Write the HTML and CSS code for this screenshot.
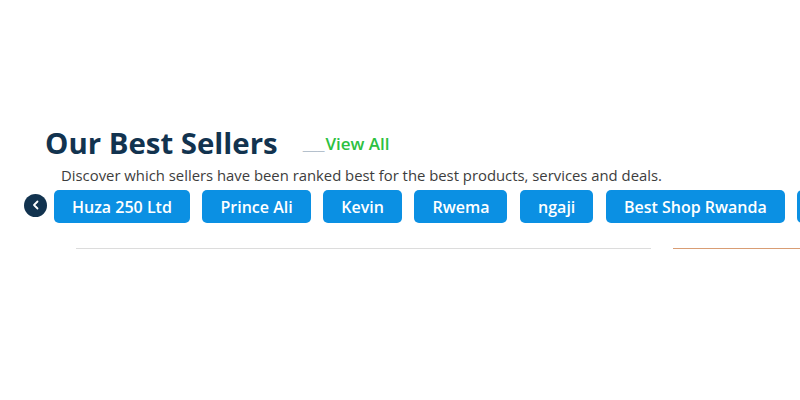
FILE: index.html
```html
<!DOCTYPE html>
<html>
<head>
<meta charset="utf-8">
<link rel="stylesheet" href="styles.css">
</head>
<body>
<section class="sellers">
  <div class="head">
    <h2 class="title">Our Best Sellers</h2>
    <a class="view-all"><span class="dash">___</span>View All</a>
  </div>
  <p class="sub">Discover which sellers have been ranked best for the best products, services and deals.</p>
  <div class="row">
    <button class="prev" aria-label="Previous">
      <svg width="10" height="10" viewBox="0 0 10 10"><path d="M6.5 1.5 L3 5 L6.5 8.5" fill="none" stroke="#fff" stroke-width="1.8" stroke-linecap="round" stroke-linejoin="round"/></svg>
    </button>
    <div class="chips">
      <span class="chip">Huza 250 Ltd</span>
      <span class="chip">Prince Ali</span>
      <span class="chip">Kevin</span>
      <span class="chip">Rwema</span>
      <span class="chip">ngaji</span>
      <span class="chip">Best Shop Rwanda</span>
      <span class="chip chip-next"></span>
    </div>
  </div>
  <div class="lines">
    <div class="line gray"></div>
    <div class="line orange"></div>
  </div>
</section>
</body>
</html>
```
FILE: styles.css
```css
html, body {
  margin: 0;
  padding: 0;
  background: #fff;
  font-family: "Open Sans", "Liberation Sans", sans-serif;
}
.sellers {
  padding-top: 124px;
  overflow: hidden;
  width: 800px;
}
.head {
  display: flex;
  align-items: baseline;
  padding-left: 45px;
  height: 38px;
}
.title {
  margin: 0;
  font-size: 29.4px;
  line-height: 38px;
  font-weight: 700;
  color: #12334f;
}
.view-all {
  margin-left: 25px;
  font-size: 17px;
  font-weight: 600;
  color: #2cc140;
  position: relative;
  top: -4px;
}
.dash {
  color: #b4c0cc;
  font-weight: 400;
  letter-spacing: -0.2px;
  margin-right: 1px;
}
.sub {
  margin: 3px 0 0 61px;
  font-size: 14.85px;
  line-height: 21px;
  color: #3d3d3d;
}
.row {
  display: flex;
  align-items: center;
  margin-top: 4px;
  padding-left: 24px;
  gap: 7px;
}
.prev {
  flex: none;
  width: 23px;
  height: 23px;
  border-radius: 50%;
  border: none;
  background: #12334f;
  padding: 0;
  display: flex;
  align-items: center;
  justify-content: center;
  margin-top: -3px;
}
.chips {
  display: flex;
  gap: 12.6px;
  flex: none;
}
.chip {
  flex: none;
  height: 33px;
  box-sizing: border-box;
  padding: 0 18px;
  display: flex;
  align-items: center;
  background: #0b90e3;
  color: #fff;
  font-size: 16px;
  font-weight: 600;
  border-radius: 5px;
}
.chip-next {
  width: 60px;
}
.lines {
  display: flex;
  gap: 22px;
  padding-left: 76px;
  margin-top: 25px;
}
.line {
  height: 1px;
}
.gray {
  width: 575px;
  background: #dcdcdc;
}
.orange {
  flex: 1;
  background: #d99d74;
}
```
